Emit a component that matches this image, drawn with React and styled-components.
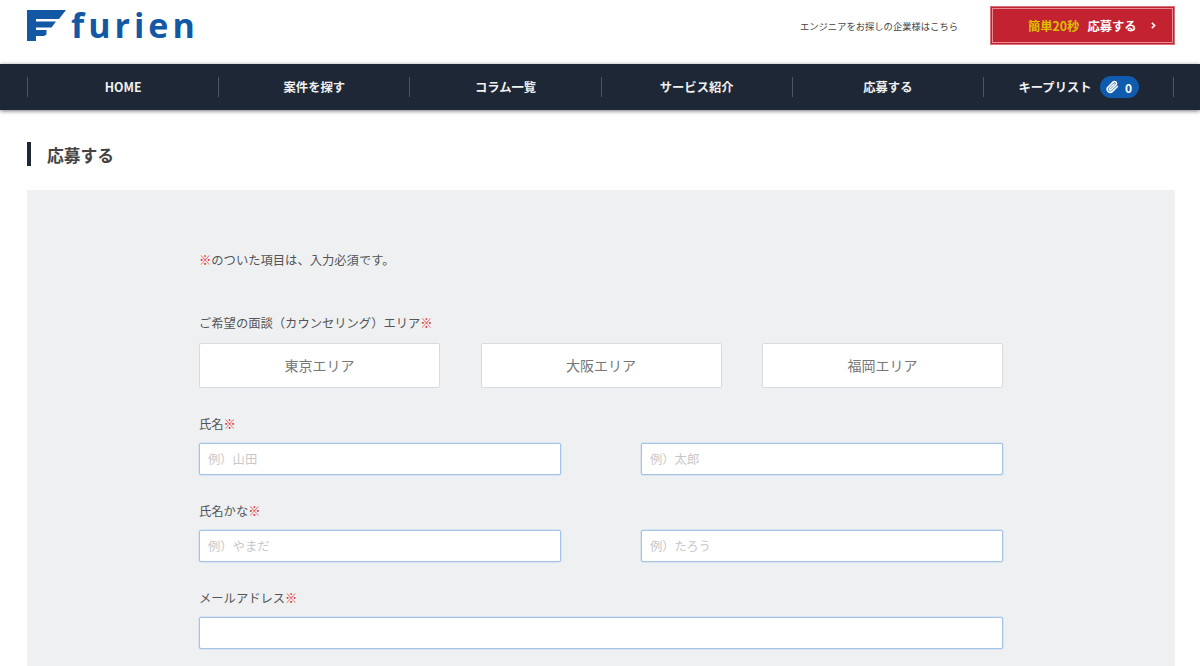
import React from "react";
import styled, { createGlobalStyle } from "styled-components";

const Global = createGlobalStyle`
  html, body { margin: 0; padding: 0; height: 666px; overflow: hidden; background: #fff; }
  body { font-family: "Noto Sans CJK JP", "Noto Sans", sans-serif; color: #444; }
  * { box-sizing: border-box; }
`;
const Page = styled.div`height: 666px; overflow: hidden;`;
const Header = styled.header`
  height: 64px; display: flex; align-items: flex-start; justify-content: space-between;
  padding: 6px 25px 0 27px;
`;
const Logo = styled.div`display: flex; align-items: center; gap: 5px; height: 36px; margin-top: 1px;`;
const LogoText = styled.span`
  font-family: "Open Sans", sans-serif; font-weight: 700; font-size: 34px; line-height: 36px;
  letter-spacing: 4px; color: #1258a5;
`;
const HeaderRight = styled.div`display: flex; align-items: center; gap: 32px;`;
const HeaderLink = styled.span`font-size: 9.3px; color: #444; margin-top: 1px;`;
const ApplyButton = styled.a`
  width: 185px; height: 39px; background: #c32330; border: 2px solid #c32330;
  outline: 1px solid #d9707a; outline-offset: -1px; box-shadow: inset 0 0 0 1px #e58d94;
  display: flex; align-items: center; padding-left: 36px; font-size: 12.3px; font-weight: 700; color: #fff;
`;
const Yellow = styled.span`color: #dcc000; margin-right: 8px;`;
const Chevron = styled.span`display: flex; margin-left: 14px;`;
const Nav = styled.nav`
  height: 46px; background: #1d2735; display: grid; grid-template-columns: repeat(6, 191.2px);
  padding: 13px 0 0 27px; box-shadow: 0 1px 4px rgba(0,0,0,.55);
  position: relative;
`;
const NavItem = styled.a`
  height: 20px; display: flex; align-items: center; justify-content: center; gap: 8px;
  border-left: 1px solid #4c5563; border-right: ${p => (p.$last ? "1px solid #4c5563" : "0")};
  color: #f0f0f0; font-size: 12.3px; font-weight: 700;
`;
const Badge = styled.span`
  height: 22px; width: 39px; border-radius: 11px; background: #0f5bad; display: flex; align-items: center;
  justify-content: center; gap: 6px; color: #fff; font-size: 12px; font-weight: 700;
`;
const Main = styled.main`padding: 32px 25px 0 27px;`;
const Title = styled.h1`
  margin: 0; height: 24px; border-left: 4px solid #1d2735; padding-left: 16px;
  font-size: 16.8px; line-height: 26px; font-weight: 700; color: #444;
`;
const Panel = styled.section`
  margin-top: 24px; background: #eef0f2; padding: 60px 172px 40px; height: 500px;
`;
const Note = styled.p`margin: 0 0 44px; height: 20px; font-size: 12.3px; line-height: 20px; color: #555;`;
const Req = styled.span`color: #dd1f26;`;
const Label = styled.div`font-size: 12.3px; line-height: 20px; height: 20px; margin-bottom: 9px; color: #555;`;
const AreaLabel = styled(Label)`line-height: 18px;`;
const Choices = styled.div`display: grid; grid-template-columns: repeat(3, 241px); justify-content: space-between; margin-bottom: 26px;`;
const Choice = styled.div`
  height: 45px; background: #fff; border: 1px solid #d9dbde; border-radius: 2px; display: flex;
  align-items: center; justify-content: center; font-size: 14px; color: #777; padding-bottom: 2px;
`;
const Row = styled.div`display: grid; grid-template-columns: 362px 362px; justify-content: space-between; margin-bottom: 26px;`;
const Input = styled.input`
  display: block; width: 100%; height: 32px; background: #fff; border: 1px solid #a3c4e6; border-radius: 2px;
  padding: 0 8px; font-family: inherit; font-size: 12.3px; color: #444; outline: none;
  box-shadow: 0 0 0 .5px #c4d8ee;
  &::placeholder { color: #c8c8c8; opacity: 1; }
`;
const LogoMark = () => (
  <svg width="39" height="31" viewBox="0 0 39 31" fill="#1258a5">
    <path d="M0 0H39L32 9H9V11.5H29L24.5 17.5H9V20H19.5V24.5L17 26H9V31H0Z" />
  </svg>
);
const Clip = () => (
  <svg width="13" height="14" viewBox="0 0 24 24" fill="none" stroke="#fff" strokeWidth="3" strokeLinecap="round" strokeLinejoin="round">
    <path d="M21 11 12 20a5.5 5.5 0 0 1-8-8l9-9a3.7 3.7 0 0 1 5.3 5.2L9.5 17a1.8 1.8 0 0 1-2.6-2.6L15 6.5" />
  </svg>
);
const Arrow = () => (
  <svg width="5" height="7" viewBox="0 0 6 8" fill="none" stroke="#fff" strokeWidth="1.9"><path d="M1 .8 4.4 4 1 7.2" /></svg>
);

export default function App() {
  return (
    <Page>
      <Global />
      <Header>
        <Logo><LogoMark /><LogoText>furien</LogoText></Logo>
        <HeaderRight>
          <HeaderLink>エンジニアをお探しの企業様はこちら</HeaderLink>
          <ApplyButton><Yellow>簡単20秒</Yellow>応募する<Chevron><Arrow /></Chevron></ApplyButton>
        </HeaderRight>
      </Header>
      <Nav>
        <NavItem>HOME</NavItem>
        <NavItem>案件を探す</NavItem>
        <NavItem>コラム一覧</NavItem>
        <NavItem>サービス紹介</NavItem>
        <NavItem>応募する</NavItem>
        <NavItem $last>キープリスト<Badge><Clip />0</Badge></NavItem>
      </Nav>
      <Main>
        <Title>応募する</Title>
        <Panel>
          <Note><Req>※</Req>のついた項目は、入力必須です。</Note>
          <AreaLabel>ご希望の面談（カウンセリング）エリア<Req>※</Req></AreaLabel>
          <Choices>
            <Choice>東京エリア</Choice>
            <Choice>大阪エリア</Choice>
            <Choice>福岡エリア</Choice>
          </Choices>
          <Label>氏名<Req>※</Req></Label>
          <Row><Input placeholder="例）山田" /><Input placeholder="例）太郎" /></Row>
          <Label>氏名かな<Req>※</Req></Label>
          <Row><Input placeholder="例）やまだ" /><Input placeholder="例）たろう" /></Row>
          <Label>メールアドレス<Req>※</Req></Label>
          <Input />
        </Panel>
      </Main>
    </Page>
  );
}
